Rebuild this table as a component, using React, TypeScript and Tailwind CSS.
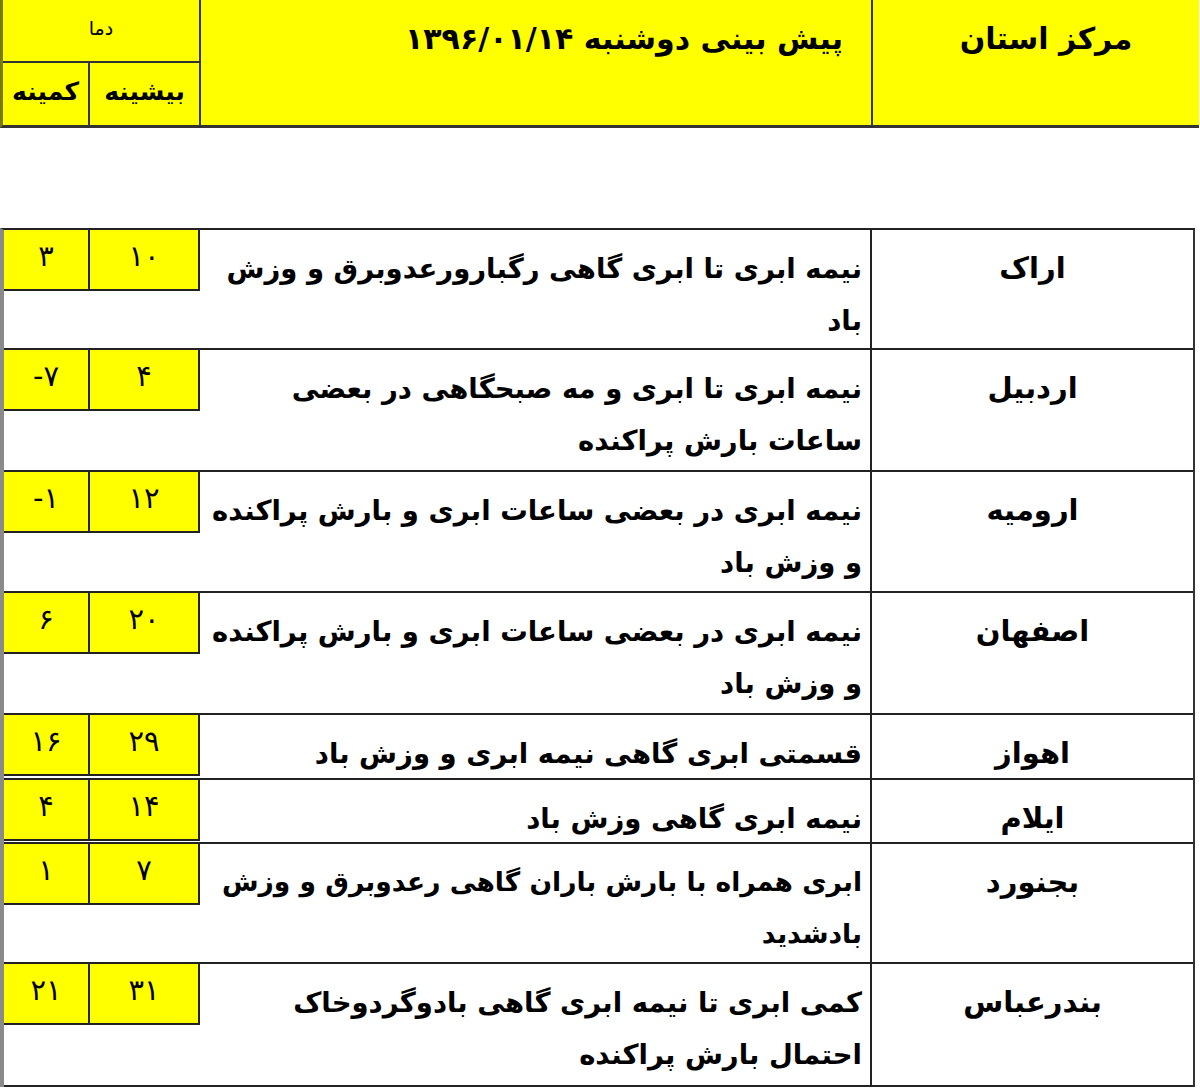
import React from "react";

type Row = {
  city: string;
  lines: string[];
  max: string;
  min: string;
  h: number;
  small?: boolean;
};

const ROWS: Row[] = [
  { city: "اراک", lines: ["نیمه ابری تا ابری گاهی رگبارورعدوبرق و وزش", "باد"], max: "۱۰", min: "۳", h: 120 },
  { city: "اردبیل", lines: ["نیمه ابری تا ابری و مه صبحگاهی در بعضی", "ساعات بارش پراکنده"], max: "۴", min: "-۷", h: 122 },
  { city: "ارومیه", lines: ["نیمه ابری در بعضی ساعات ابری و بارش پراکنده", "و وزش باد"], max: "۱۲", min: "-۱", h: 121 },
  { city: "اصفهان", lines: ["نیمه ابری در بعضی ساعات ابری و بارش پراکنده", "و وزش باد"], max: "۲۰", min: "۶", h: 122 },
  { city: "اهواز", lines: ["قسمتی ابری گاهی نیمه ابری و وزش باد"], max: "۲۹", min: "۱۶", h: 65 },
  { city: "ایلام", lines: ["نیمه ابری گاهی وزش باد"], max: "۱۴", min: "۴", h: 64 },
  { city: "بجنورد", lines: ["ابری همراه با بارش باران گاهی رعدوبرق و وزش", "بادشدید"], max: "۷", min: "۱", h: 120, small: true },
  { city: "بندرعباس", lines: ["کمی ابری تا نیمه ابری گاهی بادوگردوخاک", "احتمال بارش پراکنده"], max: "۳۱", min: "۲۱", h: 123 },
];

const font = { fontFamily: '"DejaVu Sans", sans-serif' };

export default function App() {
  return (
    <div className="w-[1200px] bg-white text-black" style={font}>
      {/* header */}
      <div className="flex h-[128px] border-b-[3px] border-[#333] border-l-[3px] border-l-[#7a7a00] bg-[#ffff00] w-[1199px]">
        <div className="flex w-[198px] flex-col border-r-2 border-[#333]">
          <div className="flex h-[63px] items-center justify-center border-b-2 border-[#333] pb-1 text-[19px]">دما</div>
          <div className="flex flex-1">
            <div className="flex w-[87px] items-center justify-center border-r-2 border-[#333] pb-1 text-[25px] font-bold">کمینه</div>
            <div className="flex flex-1 items-center justify-center pb-1 text-[25px] font-bold">بیشینه</div>
          </div>
        </div>
        <div dir="rtl" className="flex w-[672px] items-start border-r-2 border-[#333] pr-[28px] pt-[16px] text-[30px] font-bold">
          پیش بینی دوشنبه ۱۳۹۶/۰۱/۱۴
        </div>
        <div dir="rtl" className="flex flex-1 items-start justify-center pl-[20px] pt-[16px] text-[30px] font-bold">
          مرکز استان
        </div>
      </div>

      <div className="h-[100px]" />

      {/* table */}
      <div className="w-[1195px] border-t-2 border-[#222] border-l-4 border-l-[#8a8a8a] border-r-2 border-r-[#333]">
        {ROWS.map((r) => (
          <div key={r.city} className="flex border-b-2 border-[#222]" style={{ height: r.h }}>
            <div className="w-[196px]">
              <div className="flex h-[61px] border-b-2 border-r-2 border-[#222] bg-[#ffff00] text-[29px]">
                <div className="flex w-[86px] items-start justify-center border-r-2 border-[#222] pt-[5px]">{r.min}</div>
                <div className="flex flex-1 items-start justify-center pt-[5px]">{r.max}</div>
              </div>
            </div>
            <div
              dir="rtl"
              className={
                "w-[672px] border-r-2 border-[#222] pr-[8px] pt-[12px] font-bold leading-[52px] whitespace-nowrap " +
                (r.small ? "text-[26.5px]" : "text-[27.5px]")
              }
            >
              {r.lines.map((l, i) => (
                <div key={i}>{l}</div>
              ))}
            </div>
            <div dir="rtl" className="flex flex-1 justify-center pt-[12px] text-[29px] font-bold leading-[52px]">
              {r.city}
            </div>
          </div>
        ))}
      </div>
    </div>
  );
}
